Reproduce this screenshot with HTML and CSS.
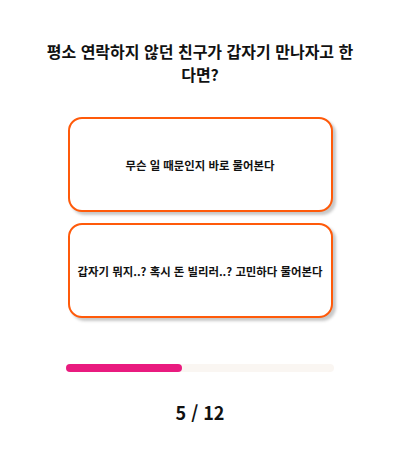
FILE: index.html
```html
<!DOCTYPE html>
<html lang="ko">

<head>
	<meta charset="UTF-8">
	<meta name="viewport" content="width=device-width, initial-scale=1.0">
	<link rel="stylesheet" href="styles.css">
	<title>질문 5</title>
</head>

<body>
	<div class="quiz">
		<h2 class="question">평소 연락하지 않던 친구가 갑자기 만나자고 한다면?</h2>

		<div class="options">
			<button class="option" type="button">무슨 일 때문인지 바로 물어본다</button>
			<button class="option" type="button">갑자기 뭐지..? 혹시 돈 빌리러..? 고민하다 물어본다</button>
		</div>

		<div class="progress">
			<div class="progress-bar" style="width: 43.4%"></div>
		</div>

		<div class="count">5 / 12</div>
	</div>
</body>

</html>
```

FILE: styles.css
```css
* {
	box-sizing: border-box;
}

body {
	margin: 0;
	background: #fff;
	color: #111;
	font-family: "Noto Sans CJK KR", "Noto Sans", sans-serif;
}

.quiz {
	display: flex;
	flex-direction: column;
	align-items: center;
	padding-top: 40px;
}

.question {
	max-width: 314px;
	margin: 0;
	font-size: 16px;
	font-weight: bold;
	line-height: 23px;
	text-align: center;
}

.options {
	display: flex;
	flex-direction: column;
	gap: 11px;
	margin-top: 31px;
}

.option {
	display: flex;
	align-items: center;
	justify-content: center;
	width: 265px;
	height: 95px;
	padding: 0 6px;
	background: #fff;
	border: 2px solid #ff5a0a;
	border-radius: 14px;
	box-shadow: 3px 3px 3px rgba(0, 0, 0, 0.22);
	color: #111;
	font-family: inherit;
	font-size: 11.4px;
	font-weight: bold;
}

.progress {
	width: 268px;
	height: 8px;
	margin-top: 46px;
	background: #faf6f2;
	border-radius: 4px;
}

.progress-bar {
	height: 100%;
	background: #e91b7f;
	border-radius: 4px;
}

.count {
	margin-top: 28px;
	font-size: 18px;
	font-weight: bold;
	line-height: 25px;
}
```
